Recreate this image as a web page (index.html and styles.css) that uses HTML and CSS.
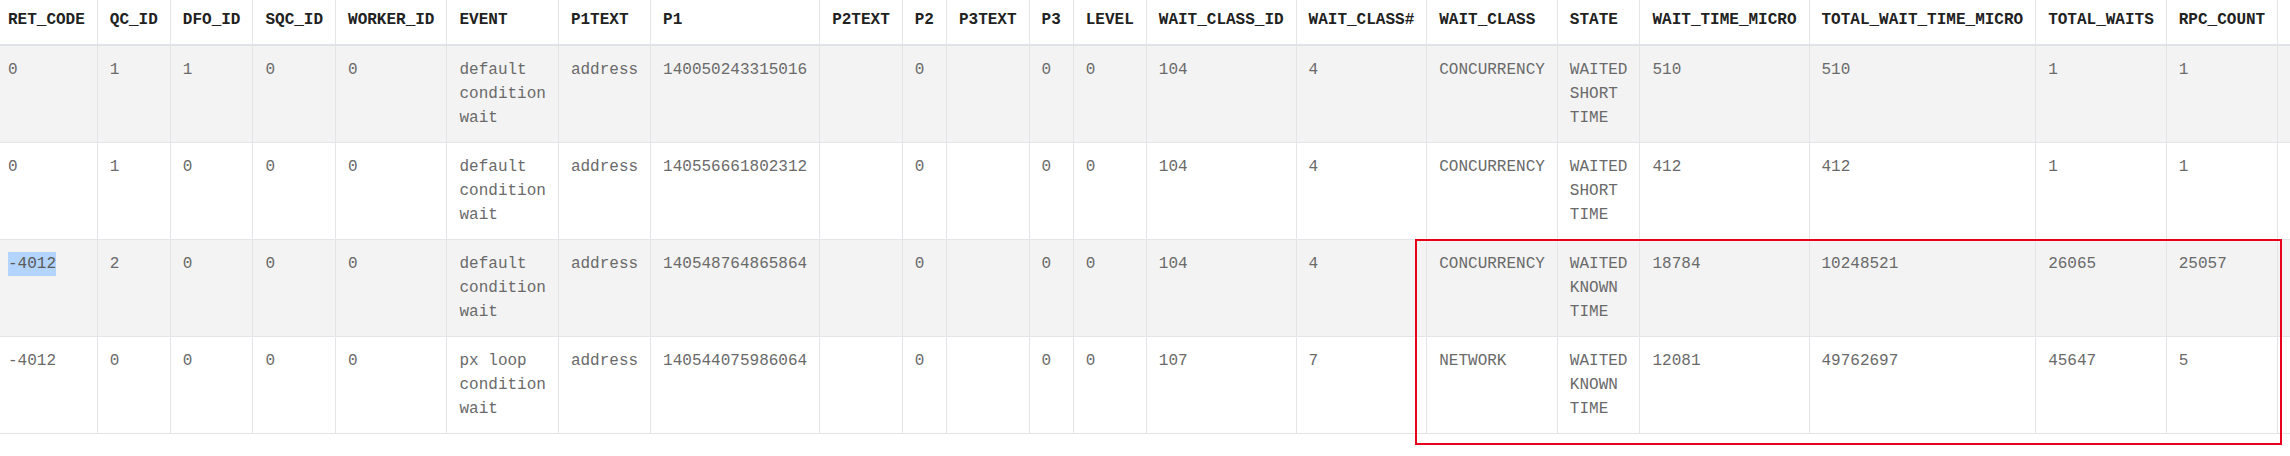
FILE: index.html
```html
<!DOCTYPE html>
<html>
<head>
<meta charset="utf-8">
<link rel="stylesheet" href="styles.css">
</head>
<body>
<div class="frame">
  <div class="scroller">
    <table class="grid">
      <thead>
        <tr>
          <th>RET_CODE</th><th>QC_ID</th><th>DFO_ID</th><th>SQC_ID</th><th>WORKER_ID</th><th>EVENT</th><th>P1TEXT</th><th>P1</th><th>P2TEXT</th><th>P2</th><th>P3TEXT</th><th>P3</th><th>LEVEL</th><th>WAIT_CLASS_ID</th><th>WAIT_CLASS#</th><th>WAIT_CLASS</th><th>STATE</th><th>WAIT_TIME_MICRO</th><th>TOTAL_WAIT_TIME_MICRO</th><th>TOTAL_WAITS</th><th>RPC_COUNT</th><th class="rest"></th>
        </tr>
      </thead>
      <tbody>
        <tr class="shade">
          <td>0</td><td>1</td><td>1</td><td>0</td><td>0</td><td>default condition wait</td><td>address</td><td>140050243315016</td><td></td><td>0</td><td></td><td>0</td><td>0</td><td>104</td><td>4</td><td>CONCURRENCY</td><td>WAITED SHORT TIME</td><td>510</td><td>510</td><td>1</td><td>1</td><td class="rest"></td>
        </tr>
        <tr>
          <td>0</td><td>1</td><td>0</td><td>0</td><td>0</td><td>default condition wait</td><td>address</td><td>140556661802312</td><td></td><td>0</td><td></td><td>0</td><td>0</td><td>104</td><td>4</td><td>CONCURRENCY</td><td>WAITED SHORT TIME</td><td>412</td><td>412</td><td>1</td><td>1</td><td class="rest"></td>
        </tr>
        <tr class="shade">
          <td><span class="selected">-4012</span></td><td>2</td><td>0</td><td>0</td><td>0</td><td>default condition wait</td><td>address</td><td>140548764865864</td><td></td><td>0</td><td></td><td>0</td><td>0</td><td>104</td><td>4</td><td>CONCURRENCY</td><td>WAITED KNOWN TIME</td><td>18784</td><td>10248521</td><td>26065</td><td>25057</td><td class="rest"></td>
        </tr>
        <tr>
          <td>-4012</td><td>0</td><td>0</td><td>0</td><td>0</td><td>px loop condition wait</td><td>address</td><td>140544075986064</td><td></td><td>0</td><td></td><td>0</td><td>0</td><td>107</td><td>7</td><td>NETWORK</td><td>WAITED KNOWN TIME</td><td>12081</td><td>49762697</td><td>45647</td><td>5</td><td class="rest"></td>
        </tr>
      </tbody>
    </table>
  </div>
  <div class="highlight-box"></div>
</div>
</body>
</html>
```

FILE: styles.css
```css
html, body {
  margin: 0;
  padding: 0;
  background: #ffffff;
}

.frame {
  position: relative;
  width: 2290px;
  height: 456px;
  overflow: hidden;
}

.scroller {
  width: 2290px;
  overflow: hidden;
}

.grid {
  border-collapse: collapse;
  width: 1px;
  font-family: "Liberation Mono", "Courier New", monospace;
  font-size: 16px;
  line-height: 24px;
  color: #6a6a6a;
}

.grid th,
.grid td {
  text-align: left;
  vertical-align: top;
  border-right: 1px solid #e3e5e9;
  border-bottom: 1px solid #e3e5e9;
}

.grid th {
  padding: 8px 12px 12px 12px;
  font-weight: bold;
  color: #222222;
  background: #ffffff;
  white-space: nowrap;
  border-bottom: 2px solid #dfe2e6;
}

.grid td {
  padding: 12px 12px;
}

.grid th:first-child,
.grid td:first-child {
  padding-left: 8px;
}

.grid tr.shade td {
  background: #f3f3f3;
}

.grid .rest {
  min-width: 20px;
}

.selected {
  display: inline-block;
  background: #b3d4fc;
  color: #5a5a5a;
}

.highlight-box {
  position: absolute;
  left: 1415px;
  top: 239px;
  width: 863px;
  height: 202px;
  border: 2px solid #e8001c;
}
```
